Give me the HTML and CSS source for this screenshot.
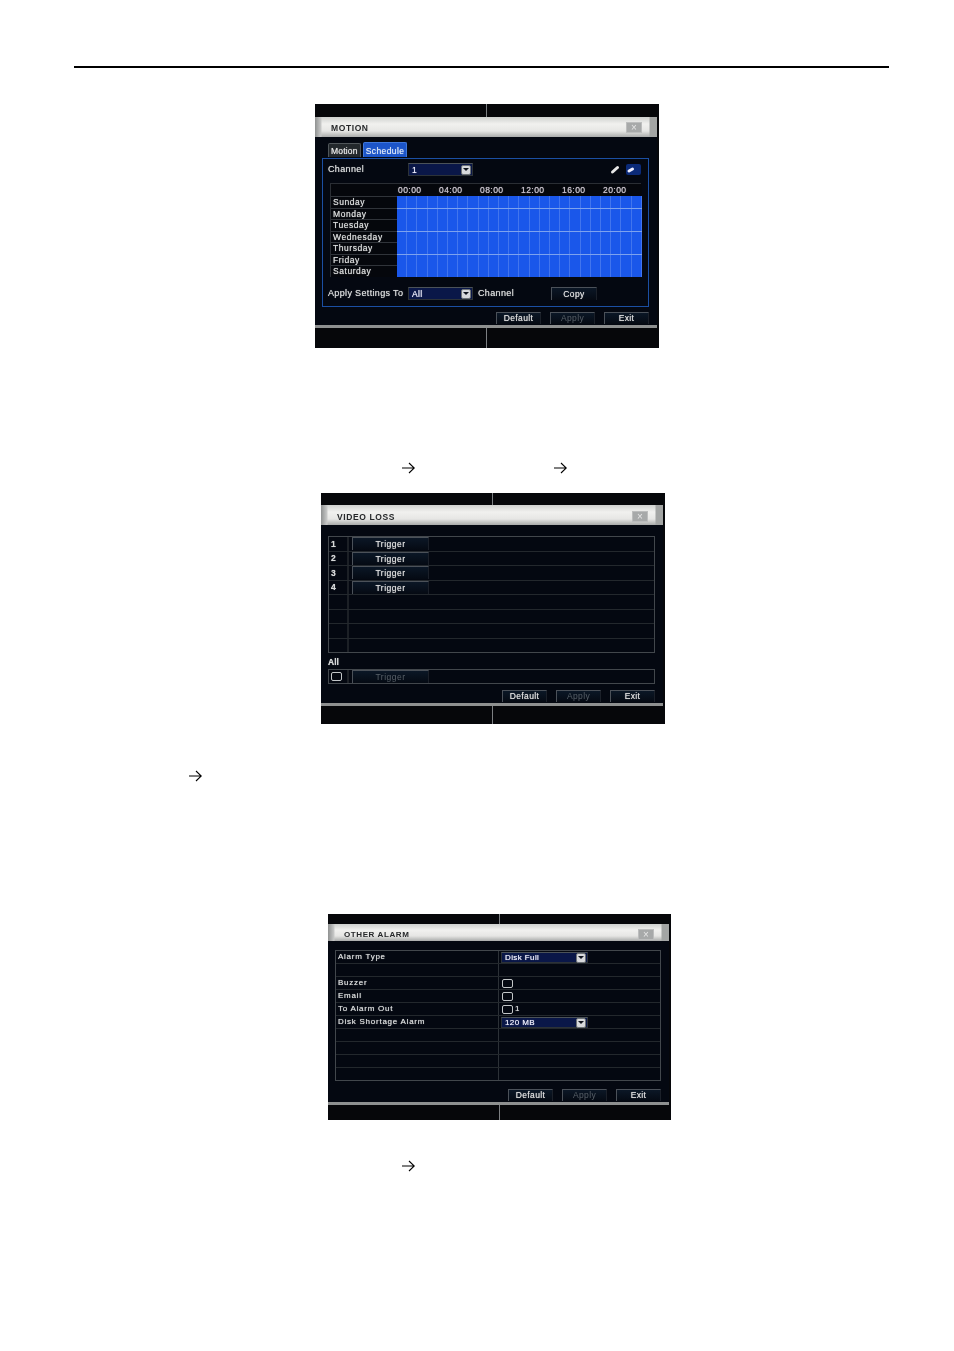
FILE: index.html
```
<!DOCTYPE html>
<html lang="en">
<head>
<meta charset="utf-8">
<title>DVR alarm settings</title>
<link rel="stylesheet" href="styles.css">
</head>
<body>
<hr class="rule">

<section class="dvr motion">
  <div class="win">
    <div class="title"><span>MOTION</span><i class="close"></i></div>
    <div class="body">
      <div class="tabs"><span class="tab">Motion</span><span class="tab on">Schedule</span></div>
      <div class="frame">
        <div class="line">
          <span class="lab">Channel</span>
          <span class="sel"><span>1</span><i class="drop"></i></span>
          <span class="tools">
            <svg class="tool" viewBox="0 0 12 11"><path d="M3.5 8 8.5 3.5" stroke="#e8e8e8" stroke-width="3" stroke-linecap="round"/></svg>
            <svg class="tool wide" viewBox="0 0 15 11"><rect x="0" y="0" width="15" height="11" rx="2" fill="#0b2a78"/><path d="M3 7 6.5 5" stroke="#eef" stroke-width="3" stroke-linecap="round"/></svg>
          </span>
        </div>
        <div class="sched">
          <div class="corner"></div>
          <div class="hours"><span>00:00</span><span>04:00</span><span>08:00</span><span>12:00</span><span>16:00</span><span>20:00</span></div>
          <div class="day">Sunday</div><div class="cells"></div>
          <div class="day">Monday</div><div class="cells mark"></div>
          <div class="day">Tuesday</div><div class="cells"></div>
          <div class="day">Wednesday</div><div class="cells mark"></div>
          <div class="day">Thursday</div><div class="cells"></div>
          <div class="day">Friday</div><div class="cells mark"></div>
          <div class="day">Saturday</div><div class="cells"></div>
        </div>
        <div class="line apply">
          <span class="lab">Apply Settings To</span>
          <span class="sel"><span>All</span><i class="drop"></i></span>
          <span class="lab after">Channel</span>
          <span class="btn copy">Copy</span>
        </div>
      </div>
      <div class="actions"><span class="btn">Default</span><span class="btn off">Apply</span><span class="btn">Exit</span></div>
    </div>
  </div>
</section>

<div class="arrows first">
  <svg class="arrow" viewBox="0 0 13 12"><path d="M0 6H12M7 1l5.3 5L7 11" fill="none" stroke="#000" stroke-width="1.1"/></svg>
  <svg class="arrow" viewBox="0 0 13 12"><path d="M0 6H12M7 1l5.3 5L7 11" fill="none" stroke="#000" stroke-width="1.1"/></svg>
</div>

<section class="dvr loss">
  <div class="win">
    <div class="title"><span>VIDEO LOSS</span><i class="close"></i></div>
    <div class="body">
      <div class="tbl lossgrid">
        <div class="row"><span class="num">1</span><span class="btn trig">Trigger</span></div>
        <div class="row"><span class="num">2</span><span class="btn trig">Trigger</span></div>
        <div class="row"><span class="num">3</span><span class="btn trig">Trigger</span></div>
        <div class="row"><span class="num">4</span><span class="btn trig">Trigger</span></div>
        <div class="row"><span class="num"></span></div>
        <div class="row"><span class="num"></span></div>
        <div class="row"><span class="num"></span></div>
        <div class="row"><span class="num"></span></div>
      </div>
      <div class="all">All</div>
      <div class="tbl allrow"><div class="row"><span class="num"><i class="box"></i></span><span class="btn trig off">Trigger</span></div></div>
      <div class="actions"><span class="btn">Default</span><span class="btn off">Apply</span><span class="btn">Exit</span></div>
    </div>
  </div>
</section>

<div class="arrows second">
  <svg class="arrow" viewBox="0 0 13 12"><path d="M0 6H12M7 1l5.3 5L7 11" fill="none" stroke="#000" stroke-width="1.1"/></svg>
</div>

<section class="dvr other">
  <div class="win">
    <div class="title"><span>OTHER ALARM</span><i class="close"></i></div>
    <div class="body">
      <div class="tbl othergrid">
        <div class="row"><span class="key">Alarm Type</span><span class="val"><span class="sel"><span>Disk Full</span><i class="drop"></i></span></span></div>
        <div class="row"><span class="key"></span><span class="val"></span></div>
        <div class="row"><span class="key">Buzzer</span><span class="val"><i class="box"></i></span></div>
        <div class="row"><span class="key">Email</span><span class="val"><i class="box"></i></span></div>
        <div class="row"><span class="key">To Alarm Out</span><span class="val"><i class="box"></i>1</span></div>
        <div class="row"><span class="key">Disk Shortage Alarm</span><span class="val"><span class="sel"><span>120 MB</span><i class="drop"></i></span></span></div>
        <div class="row"><span class="key"></span><span class="val"></span></div>
        <div class="row"><span class="key"></span><span class="val"></span></div>
        <div class="row"><span class="key"></span><span class="val"></span></div>
        <div class="row"><span class="key"></span><span class="val"></span></div>
      </div>
      <div class="actions"><span class="btn">Default</span><span class="btn off">Apply</span><span class="btn">Exit</span></div>
    </div>
  </div>
</section>

<div class="arrows third">
  <svg class="arrow" viewBox="0 0 13 12"><path d="M0 6H12M7 1l5.3 5L7 11" fill="none" stroke="#000" stroke-width="1.1"/></svg>
</div>
</body>
</html>
```
FILE: styles.css
```
* { box-sizing: border-box; }
html, body { margin: 0; padding: 0; background: #fff; }
body { height: 1351px; overflow: hidden; padding-top: 66px; font-family: "Liberation Sans", Arial, sans-serif; }

.rule { margin: 0 65px 0 74px; height: 2px; border: 0; background: #000; }

.arrows { display: flex; height: 12px; }
.arrow { width: 13px; height: 12px; display: block; }
.arrows.first { margin-top: 114px; padding-left: 402px; gap: 139px; }
.arrows.second { margin-top: 46px; padding-left: 189px; }
.arrows.third { margin-top: 40px; padding-left: 402px; }

/* DVR screenshot */
.dvr { position: relative; width: 344px; background: #06070a; color: #d6d8d8; font-size: 8.5px; line-height: 1; filter: blur(.45px); text-shadow: 0 0 .8px rgba(255,255,255,.8); }
.dvr::before, .dvr::after { content: ""; position: absolute; left: 171px; width: 1px; background: #7c7f82; }
.dvr::before { top: 0; }
.dvr::after { bottom: 0; }

.motion { margin: 36px 0 0 315px; height: 244px; padding-top: 13px; }
.motion::before { height: 13px; }
.motion::after { height: 20px; }
.motion .win { height: 211px; }
.loss { margin: 19px 0 0 321px; height: 231px; padding-top: 12px; }
.loss::before { height: 12px; }
.loss::after { height: 18px; }
.loss .win { height: 201px; }
.other { margin: 132px 0 0 328px; width: 343px; height: 206px; padding-top: 10px; }
.other::before { height: 10px; }
.other::after { height: 15px; }
.other .win { height: 181px; }

.win { margin: 0 2px 0 0; background: #040811; border-bottom: 3px solid #8e9090; display: flex; flex-direction: column; }
.title { flex: none; height: 20px; display: flex; align-items: center; justify-content: space-between; padding: 2px 15px 0 16px; background: linear-gradient(90deg, #8f9191 0, #c8c9c8 6px, transparent 7px, transparent calc(100% - 8px), #a3a5a4 calc(100% - 7px)), linear-gradient(#cfd1cf, #f1f1ef 35%, #e6e6e4 70%, #a9abaa); color: #26282a; font-weight: 700; font-size: 8.5px; letter-spacing: .6px; text-shadow: none; }
.loss .title { padding-top: 4px; }
.other .title { height: 17px; padding-top: 4px; font-size: 8px; }
.close { width: 16px; height: 11px; background: #a7a9a9; border: 1px solid #bcbdbd; margin-top: -1px; position: relative; }
.close::after { content: "×"; position: absolute; left: 4px; top: 0; font-style: normal; font-size: 10px; line-height: 9px; color: #e6e6e6; font-weight: 400; }

.body { flex: 1; padding: 6px 8px 0 7px; display: flex; flex-direction: column; }

.tabs { display: flex; gap: 2px; padding-left: 6px; height: 15px; }
.tab { height: 14px; padding: 3px 2px 0; background: #23282c; border: 1px solid #50565a; border-bottom: 0; border-radius: 2px 2px 0 0; letter-spacing: .2px; color: #e4e4e4; }
.tab.on { height: 15px; margin-top: -1px; padding: 4px 2px 0; background: #1c55c9; border-color: #3f78dc; color: #dbe6f8; letter-spacing: .4px; }

.frame { height: 149px; margin-top: 0; padding: 4px 6px 0 5px; border: 1px solid #1b4fa3; }
.line { display: flex; align-items: center; height: 13px; }
.lab { font-size: 9px; letter-spacing: .35px; }
.line .lab:first-child { width: 80px; flex: none; white-space: nowrap; }
.after { margin-left: 5px; }
.apply { margin-top: 10px; }

.sel { flex: none; display: inline-flex; align-items: center; justify-content: space-between; width: 65px; height: 13px; padding: 1px 1px 0 3px; background: #0a1748; border: 1px solid #2c3238; border-top-color: #4b5258; color: #eef; letter-spacing: .4px; }
.drop { position: relative; width: 10px; height: 10px; background: #d7d9dc; border: 1px solid #6d7276; border-radius: 2px; }
.drop::after { content: ""; position: absolute; left: 1px; top: 2px; border: 3px solid transparent; border-top: 3px solid #10151f; }
.tools { margin-left: auto; display: flex; gap: 5px; margin-right: 1px; }
.tool { width: 12px; height: 11px; display: block; }
.tool.wide { width: 15px; }

.sched { display: grid; grid-template-columns: 66px 245px; grid-template-rows: 12px repeat(7, 1fr); height: 94px; width: 311px; margin: 7px 0 0 2px; border: 1px solid #2a2e34; border-width: 1px 0 0 1px; background: #05070c; }
.corner { grid-column: 1; grid-row: 1; }
.hours { grid-column: 2; grid-row: 1; display: grid; grid-template-columns: repeat(6, 41px); align-items: center; color: #c4bcc8; font-size: 8.5px; letter-spacing: .45px; background: #05070c; }
.hours span { padding-left: 1px; }
.day { grid-column: 1; display: flex; align-items: center; padding-left: 2px; border-top: 1px solid #30343a; letter-spacing: .55px; color: #d8dada; }
.cells { grid-column: 2; background-color: #1a57ea; background-image: repeating-linear-gradient(90deg, transparent 0, transparent 9.2px, rgba(150,180,245,.32) 9.2px, rgba(150,180,245,.32) 10.2px); }
.cells.mark { border-top: 1px solid #7da2ee; }

.btn { display: flex; align-items: center; justify-content: center; height: 12px; width: 45px; background: linear-gradient(#0b1726, #050a13); border-top: 1px solid #4b5159; border-left: 1px solid #4b5159; border-right: 1px solid #1b2029; color: #dcdcdc; letter-spacing: .35px; flex: none; }
.btn.off { color: #586068; text-shadow: none; }
.copy { margin-left: 37px; height: 13px; width: 46px; }
.actions { display: flex; justify-content: flex-end; gap: 9px; margin-top: 5px; height: 12px; }

.tbl { border: 1px solid #42474c; display: flex; flex-direction: column; }
.row { flex: 1; display: flex; align-items: center; border-top: 1px solid #23282d; min-height: 0; }
.row:first-child { border-top: 0; }

.loss .body { padding-top: 11px; }
.lossgrid { height: 117px; }
.num { align-self: stretch; width: 20px; display: flex; align-items: center; padding-left: 2px; border-right: 2px solid #1c2026; font-weight: 700; }
.trig { width: 77px; margin-left: 3px; height: 13px; letter-spacing: .5px; }
.all { height: 13px; margin-top: 3px; padding-top: 2px; font-weight: 700; }
.allrow { height: 15px; margin-top: 0; }
.box { display: block; flex: none; width: 11px; height: 9px; border: 1px solid #c2c6c8; border-radius: 2px; }
.loss .actions { margin-top: 6px; }

.other .body { padding: 9px 8px 0 7px; }
.othergrid { height: 131px; }
.key { align-self: stretch; width: 163px; display: flex; align-items: center; padding-left: 2px; border-right: 1px solid #2c3137; letter-spacing: .75px; font-size: 8px; }
.val { display: flex; align-items: center; gap: 2px; padding-left: 2px; font-size: 8px; letter-spacing: .8px; }
.val .box { margin-left: 1px; }
.other .sel { width: 87px; height: 11px; background: #0a1748; }
.other .actions { margin-top: 8px; }
```
